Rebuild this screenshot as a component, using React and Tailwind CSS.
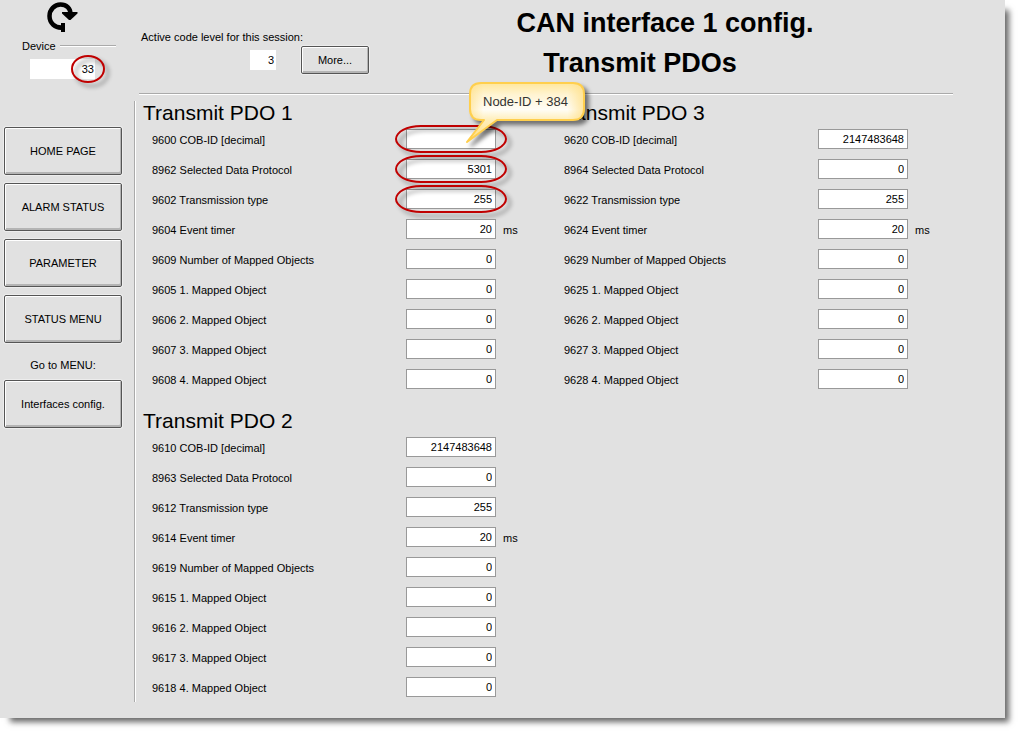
import React from 'react';

const NAV_ITEMS = ['HOME PAGE', 'ALARM STATUS', 'PARAMETER', 'STATUS MENU'];

const PDO_1 = [
  { id: '9600', name: 'COB-ID [decimal]', value: '', marked: true, hint: 'Node-ID + 384' },
  { id: '8962', name: 'Selected Data Protocol', value: '5301', marked: true },
  { id: '9602', name: 'Transmission type', value: '255', marked: true },
  { id: '9604', name: 'Event timer', value: '20', unit: 'ms' },
  { id: '9609', name: 'Number of Mapped Objects', value: '0' },
  { id: '9605', name: '1. Mapped Object', value: '0' },
  { id: '9606', name: '2. Mapped Object', value: '0' },
  { id: '9607', name: '3. Mapped Object', value: '0' },
  { id: '9608', name: '4. Mapped Object', value: '0' },
];

const PDO_2 = [
  { id: '9610', name: 'COB-ID [decimal]', value: '2147483648' },
  { id: '8963', name: 'Selected Data Protocol', value: '0' },
  { id: '9612', name: 'Transmission type', value: '255' },
  { id: '9614', name: 'Event timer', value: '20', unit: 'ms' },
  { id: '9619', name: 'Number of Mapped Objects', value: '0' },
  { id: '9615', name: '1. Mapped Object', value: '0' },
  { id: '9616', name: '2. Mapped Object', value: '0' },
  { id: '9617', name: '3. Mapped Object', value: '0' },
  { id: '9618', name: '4. Mapped Object', value: '0' },
];

const PDO_3 = [
  { id: '9620', name: 'COB-ID [decimal]', value: '2147483648' },
  { id: '8964', name: 'Selected Data Protocol', value: '0' },
  { id: '9622', name: 'Transmission type', value: '255' },
  { id: '9624', name: 'Event timer', value: '20', unit: 'ms' },
  { id: '9629', name: 'Number of Mapped Objects', value: '0' },
  { id: '9625', name: '1. Mapped Object', value: '0' },
  { id: '9626', name: '2. Mapped Object', value: '0' },
  { id: '9627', name: '3. Mapped Object', value: '0' },
  { id: '9628', name: '4. Mapped Object', value: '0' },
];

function PanelButton({ className = '', children }) {
  return (
    <button
      type="button"
      className={`rounded-[2px] border border-[#555] bg-[#e1e1e1] text-center shadow-[inset_1px_1px_0_#fff,inset_-1px_-2px_0_#b4b4b4,0_0_0_1px_#ededed] ${className}`}
    >
      {children}
    </button>
  );
}

function ReloadIcon() {
  return (
    <svg width="32" height="31" viewBox="0 0 32 31" fill="none" aria-hidden="true">
      <path d="M16 25.500C8 26.500 2.500 21 2.500 14C2.500 7.500 7.500 2.500 13.500 2.500C19.500 2.500 23.500 6.500 23.500 12" stroke="#000" strokeWidth="4.5" />
      <path d="M15 10h15.500v1.500l-7 6.500h-1.500l-7-6.500z" fill="#000" />
      <path d="M14 21h4v9h-4z" fill="#000" />
    </svg>
  );
}

const CALLOUT_PATH = 'M16 2H108Q119 2 119 13V28Q119 39 108 39H32L2 61L19 39H16Q5 39 5 28V13Q5 2 16 2Z';

function Callout({ text }) {
  return (
    <div className="pointer-events-none absolute -top-[48px] left-[59px] z-10 h-[64px] w-[122px]">
      <svg
        width="122"
        height="64"
        viewBox="0 0 122 64"
        className="absolute inset-0 drop-shadow-[4px_4px_2px_rgba(0,0,0,0.5)]"
        aria-hidden="true"
      >
        <defs>
          <linearGradient id="calloutFill" x1="0" y1="0" x2="0" y2="1">
            <stop offset="0" stopColor="#ffe79c" />
            <stop offset="0.2" stopColor="#fff4d2" />
            <stop offset="0.45" stopColor="#fffdf6" />
            <stop offset="0.63" stopColor="#ffeeb8" />
            <stop offset="1" stopColor="#ffe08a" />
          </linearGradient>
          <linearGradient id="calloutEdge" x1="0" y1="0" x2="1" y2="0">
            <stop offset="0" stopColor="#ffe08a" stopOpacity="0.8" />
            <stop offset="0.14" stopColor="#ffe08a" stopOpacity="0" />
            <stop offset="0.86" stopColor="#ffe08a" stopOpacity="0" />
            <stop offset="1" stopColor="#ffe08a" stopOpacity="0.8" />
          </linearGradient>
        </defs>
        <path d={CALLOUT_PATH} fill="url(#calloutFill)" />
        <path
          d={CALLOUT_PATH}
          fill="url(#calloutEdge)"
          stroke="#ffcf4d"
          strokeWidth="2"
          strokeLinejoin="round"
        />
      </svg>
      <span className="relative block pt-[12px] pl-[18px] text-[13px] leading-[18px] whitespace-nowrap text-[#333]">
        {text}
      </span>
    </div>
  );
}

function ParameterRow({ id, name, value, unit, marked, hint }) {
  return (
    <div className="flex h-[30px] items-center">
      <label htmlFor={`p${id}`} className="flex-1 pt-[2px] whitespace-nowrap">
        {id} {name}
      </label>
      <div className="relative">
        <input
          id={`p${id}`}
          type="text"
          defaultValue={value}
          className="block h-5 w-[90px] border border-[#999] bg-white pr-[3px] text-right outline-none"
        />
        {marked && (
          <span className="pointer-events-none absolute -inset-x-[11px] -inset-y-1 rounded-[26px/14px] border-2 border-[#c00000] drop-shadow-[4px_4px_2px_rgba(0,0,0,0.4)]" />
        )}
        {hint && <Callout text={hint} />}
      </div>
      <span className="w-[59px] pt-[2px] pl-[7px]">{unit}</span>
    </div>
  );
}

function PdoGroup({ title, rows }) {
  return (
    <section>
      <h2 className="text-[21px] leading-[23px]">{title}</h2>
      <div className="pl-[9px]">
        {rows.map((row) => (
          <ParameterRow key={row.id} {...row} />
        ))}
      </div>
    </section>
  );
}

function Sidebar() {
  return (
    <aside className="flex w-[134px] shrink-0 flex-col pr-3 pl-1">
      <div className="flex justify-center pt-[2px]">
        <ReloadIcon />
      </div>
      <div className="mt-[6px] flex items-center gap-1 pr-[6px] pl-[18px]">
        <label htmlFor="device" className="leading-[14px]">
          Device
        </label>
        <span className="h-[2px] flex-1 border-t border-[#aaa] bg-white" />
      </div>
      <div className="relative mt-[6px] ml-[26px] w-[65px]">
        <input
          id="device"
          type="text"
          defaultValue="33"
          className="block h-5 w-full bg-white pr-px text-right outline-none"
        />
        <span className="pointer-events-none absolute -top-1 -right-[10px] h-7 w-[34px] rounded-[50%] border-2 border-[#c00000] drop-shadow-[4px_4px_2px_rgba(0,0,0,0.4)]" />
      </div>

      <nav className="mt-12 flex flex-col gap-2">
        {NAV_ITEMS.map((item) => (
          <PanelButton key={item} className="h-12">
            {item}
          </PanelButton>
        ))}
        <p className="mt-2 text-center leading-[13px]">Go to MENU:</p>
        <PanelButton className="h-12">Interfaces config.</PanelButton>
      </nav>
    </aside>
  );
}

function Header() {
  return (
    <header className="mr-[52px] ml-[5px] flex h-[95px] border-b border-white shadow-[inset_0_-1px_0_#aaa]">
      <div className="w-[230px] pt-[30px] pl-[2px]">
        <label htmlFor="codeLevel" className="block leading-[14px] whitespace-nowrap">
          Active code level for this session:
        </label>
        <div className="mt-[2px] flex items-center justify-end gap-[25px]">
          <input
            id="codeLevel"
            type="text"
            defaultValue="3"
            className="h-5 w-[26px] bg-white pr-[2px] text-right outline-none"
          />
          <PanelButton className="h-7 w-[68px]">More...</PanelButton>
        </div>
      </div>
      <h1 className="flex-1 pt-[3px] pl-[8px] text-center text-[27px] leading-10 font-bold">
        <span className="block">CAN interface 1 config.</span>
        <span className="block pr-[50px]">Transmit PDOs</span>
      </h1>
    </header>
  );
}

export default function App() {
  return (
    <div className="bg-white pr-[15px] pb-[15px] font-['Liberation_Sans',Arial,sans-serif] text-[11px] text-black">
      <div className="flex bg-[#e1e1e1] pb-4 shadow-[7px_7px_6px_-3px_rgba(0,0,0,0.6)]">
        <Sidebar />
        <div className="min-w-0 flex-1">
          <Header />
          <main className="mt-[6px] grid grid-cols-2 gap-y-[15px] border-l border-[#aaa] pr-[38px] pl-2 shadow-[inset_1px_0_0_#fff]">
            <PdoGroup title="Transmit PDO 1" rows={PDO_1} />
            <PdoGroup title="Transmit PDO 3" rows={PDO_3} />
            <PdoGroup title="Transmit PDO 2" rows={PDO_2} />
          </main>
        </div>
      </div>
    </div>
  );
}
